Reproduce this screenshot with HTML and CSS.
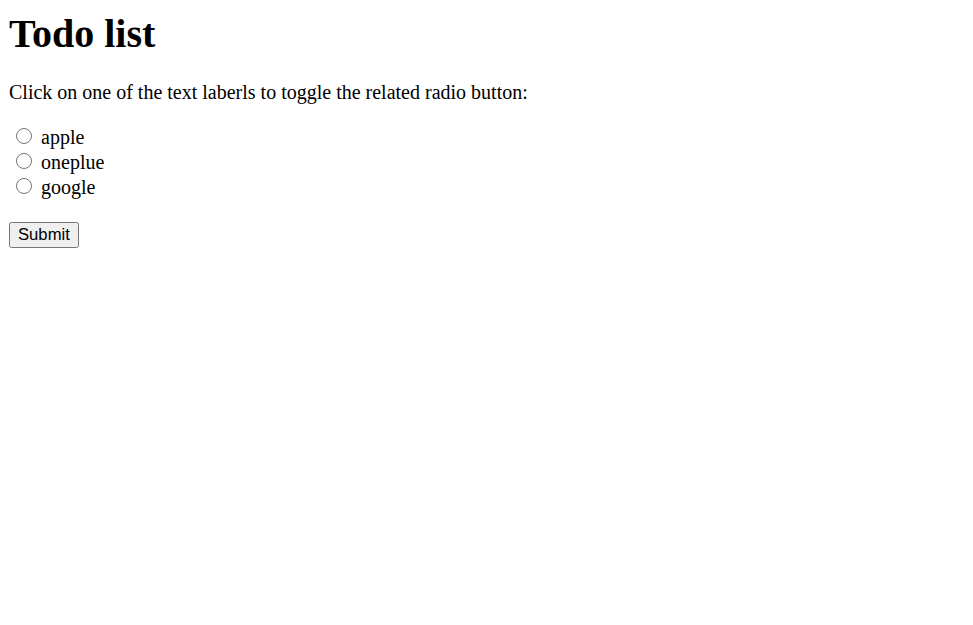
FILE: index.html
```html
<!DOCTYPE html>
<html>
<head>
<meta charset="utf-8">
<link rel="stylesheet" href="styles.css">
</head>
<body>
<h1 class="title">Todo list</h1>
<p class="intro">Click on one of the text laberls to toggle the related radio button:</p>
<form class="form">
  <div class="option"><input type="radio" class="radio" name="brand" id="apple"> <label for="apple">apple</label></div>
  <div class="option"><input type="radio" class="radio" name="brand" id="oneplue"> <label for="oneplue">oneplue</label></div>
  <div class="option"><input type="radio" class="radio" name="brand" id="google"> <label for="google">google</label></div>
  <br>
  <button type="submit" class="submit">Submit</button>
</form>
</body>
</html>
```
FILE: styles.css
```css
body {
  margin: 10px 9px;
  font-family: "Liberation Serif", "Times New Roman", serif;
  font-size: 20px;
  color: #000;
  background: #fff;
}
.title {
  font-size: 40px;
  margin: 0 0 24px;
}
.intro {
  margin: 20px 0;
}
.radio {
  width: 16px;
  height: 16px;
  margin: 4px 4px 0 7px;
}
.submit {
  font-family: "Liberation Sans", Arial, sans-serif;
  font-size: 16.67px;
  padding: 1px 7px;
}
```
